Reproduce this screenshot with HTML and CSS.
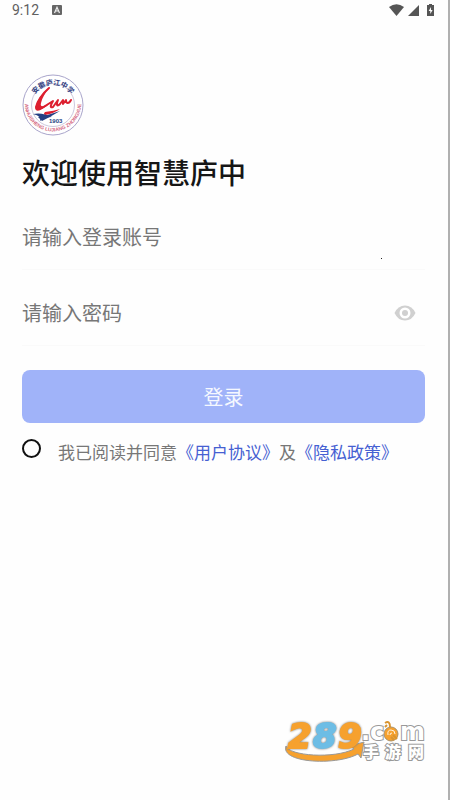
FILE: index.html
```html
<!DOCTYPE html>
<html lang="zh-CN">
<head>
<meta charset="utf-8">
<meta name="viewport" content="width=device-width, initial-scale=1">
<title>智慧庐中</title>
<link rel="stylesheet" href="styles.css">
</head>
<body>
<div class="screen">
  <header class="status">
    <div class="status-group">
      <span>9:12</span>
      <svg width="10" height="10" viewBox="0 0 10 10" aria-hidden="true"><rect width="10" height="10" rx="1" fill="#666"/><path d="M2.5 8 5 2.3 7.5 8M3.5 6h3" fill="none" stroke="#eee" stroke-width="1.2"/></svg>
    </div>
    <svg width="46" height="14" viewBox="0 0 46 14" fill="#555" aria-hidden="true">
      <path d="M0 4Q7.500-1.500 15 4L7.500 13Z"/>
      <path d="M30 2V13H19Z"/>
      <path d="M38 2h2V1h3v1h2v11h-7z"/>
      <path d="M42 4 39.700 8h1.600v3L43.600 7H42z" fill="#fff"/>
    </svg>
  </header>

  <main class="login">
    <svg class="crest" width="62" height="62" viewBox="0 0 62 62" aria-hidden="true">
      <defs>
        <path id="arc-top" d="M9 33A22 22 0 1 1 53 33"/>
        <path id="arc-bottom" d="M3 25A28.300 28.300 0 1 0 59 25"/>
      </defs>
      <circle cx="31" cy="31" r="30" fill="#fff" stroke="#a9a5cb" stroke-width="1"/>
      <circle cx="31" cy="31" r="21.500" fill="#fff" stroke="#cdc8dc" stroke-width="1"/>
      <text class="crest-top"><textPath href="#arc-top" startOffset="50%" text-anchor="middle">安徽庐江中学</textPath></text>
      <text class="crest-bottom"><textPath href="#arc-bottom" startOffset="50%" text-anchor="middle">ANHUISHENG LUJIANG ZHONGXUE</textPath></text>
      <path d="M27 14C20 20 15 28 14 33C14 37 17 36 20 34L31 27C28 32 28 34 31 33L36 26C34 31 35 33 38 30L41 26L41 30L44 26C44 30 47 30 49 26" fill="none" stroke="#dd2030" stroke-width="2" stroke-linejoin="round" stroke-linecap="round"/>
      <path d="M28 13C19 20 13 29 14 35C17 38 24 33 27 30C20 33 18 33 19 29C20 24 23 19 28 13Z" fill="#dd2030"/>
      <path d="M23 38Q32 37 38 35Q31 40 23 41Q21 40 23 38Z" fill="#dd2030"/>
      <path d="M11 40Q20 38 30 43Q22 43 18 47Q20 42 11 40Z" fill="#253f83"/>
      <path d="M16 43Q27 41 38 37Q28 43 20 47Z" fill="#253f83"/>
      <text class="crest-year" x="27" y="49">1903</text>
    </svg>
    <h1>欢迎使用智慧庐中</h1>
    <form>
      <div class="field">
        <input type="text" placeholder="请输入登录账号" aria-label="登录账号">
      </div>
      <div class="field">
        <input type="password" placeholder="请输入密码" aria-label="密码">
        <button class="reveal" type="button" aria-label="显示密码">
          <svg width="22" height="16" viewBox="0 0 22 16"><path d="M0.500 8Q4 0.500 11 0.500T21.500 8Q18 15.500 11 15.500T0.500 8Z" fill="#d0d0d0"/><circle cx="11" cy="8" r="5.500" fill="#fff"/><circle cx="11" cy="8" r="3" fill="#d0d0d0"/></svg>
        </button>
      </div>
      <button class="submit" type="button">登录</button>
      <div class="consent">
        <input type="radio" id="agree">
        <p><label for="agree">我已阅读并同意</label><a href="#terms">《用户协议》</a>及<a href="#privacy">《隐私政策》</a></p>
      </div>
    </form>
  </main>
  <i class="speck"></i>

  <svg class="watermark" width="146" height="44" viewBox="0 0 146 44" aria-label="289.com 手游网">
    <path d="M2 26C5 36 50 39 70 29L66 26L80 22L77 38L74 34C52 46-4 43 2 26Z" fill="#f6a12e" stroke="#999" stroke-width="1"/>
    <g class="digits">
      <text x="4" y="28" fill="#f6a12e" stroke="#f6a12e">2</text>
      <text x="29" y="28" fill="#6dbde5" stroke="#6dbde5">8</text>
      <text x="54" y="28" fill="#f6a12e" stroke="#f6a12e">9</text>
    </g>
    <text class="domain" x="77" y="20">.c</text>
    <circle cx="107" cy="14" r="7" fill="#f6a12e" stroke="#a99068" stroke-width="1"/>
    <path d="M104 15Q103 10 107 10T111 14M106 15Q106 13 108 13" fill="none" stroke="#fff3dc" stroke-width="1"/>
    <path d="M101 3Q106 0 106 7M103 5L101 7M109 15L113 19M107 17L110 20" fill="none" stroke="#d9942f" stroke-width="2"/>
    <text class="domain" x="116" y="20">m</text>
    <g class="site">
      <text x="79" y="38">手</text>
      <text x="101" y="38">游</text>
      <text x="124" y="38">网</text>
    </g>
  </svg>
</div>
</body>
</html>
```
FILE: styles.css
```css
* { box-sizing: border-box; }

body {
  margin: 0;
  background: #fefefe;
  color: #777;
  font-family: "Noto Sans CJK SC", sans-serif;
}

.screen {
  position: relative;
  min-height: 100vh;
  border-right: 2px solid #b0b0b0;
}

.status {
  display: flex;
  justify-content: space-between;
  align-items: center;
  height: 20px;
  padding: 0 13px 0 12px;
  color: #606060;
  font: 14px/20px Roboto, sans-serif;
}

.status-group {
  display: flex;
  align-items: center;
  gap: 13px;
}

.login { padding: 54px 23px 0 22px; }

.crest { display: block; }

.crest-top {
  font: bold 7px "Noto Sans CJK SC", sans-serif;
  fill: #303c80;
}

.crest-bottom {
  font: bold 5px "Liberation Sans", sans-serif;
  fill: #d66b84;
}

.crest-year {
  font: bold 6px "Liberation Sans", sans-serif;
  fill: #253f83;
}

h1 {
  margin: 16px 0 2px;
  color: #161616;
  font-size: 28px;
  font-weight: 500;
  line-height: 40px;
}

.field {
  display: flex;
  align-items: center;
  height: 76px;
  padding: 10px 9px 0 0;
  border-bottom: 1px solid #fafafa;
}

.field input {
  flex: 1;
  min-width: 0;
  padding: 0;
  border: 0;
  outline: 0;
  background: none;
  color: #333;
  font: 20px/30px "Noto Sans CJK SC", sans-serif;
}

.field input::placeholder {
  color: #777;
  opacity: 1;
}

.reveal {
  display: flex;
  padding: 0;
  border: 0;
  background: none;
}

.submit {
  display: block;
  width: 100%;
  height: 53px;
  margin-top: 24px;
  padding: 0;
  border: 0;
  border-radius: 8px;
  background: #a0b3f9;
  color: #f5f8ff;
  font: 20px/30px "Noto Sans CJK SC", sans-serif;
}

.consent {
  display: flex;
  align-items: flex-start;
  gap: 17px;
  margin-top: 16px;
}

.consent input {
  flex: none;
  appearance: none;
  width: 19px;
  height: 19px;
  margin: 0;
  border: 2px solid #111;
  border-radius: 50%;
}

.consent p {
  margin: 0;
  font-size: 17px;
  line-height: 26px;
  white-space: nowrap;
}

.consent a {
  color: #4560d2;
  text-decoration: none;
}

.speck {
  position: absolute;
  top: 258px;
  left: 381px;
  width: 1px;
  height: 1px;
  background: #222;
}

.watermark {
  position: absolute;
  right: 18px;
  bottom: 36px;
  overflow: visible;
}

.digits {
  font: italic bold 34px "DejaVu Sans", sans-serif;
  stroke-width: 2px;
  filter: drop-shadow(0 0 1px #777);
}

.domain, .site {
  fill: #fff;
  stroke: #999;
  stroke-width: 2px;
  paint-order: stroke;
}

.domain { font: bold 24px "DejaVu Sans", sans-serif; }

.site { font: 900 16px "Noto Sans CJK SC", sans-serif; }
```
